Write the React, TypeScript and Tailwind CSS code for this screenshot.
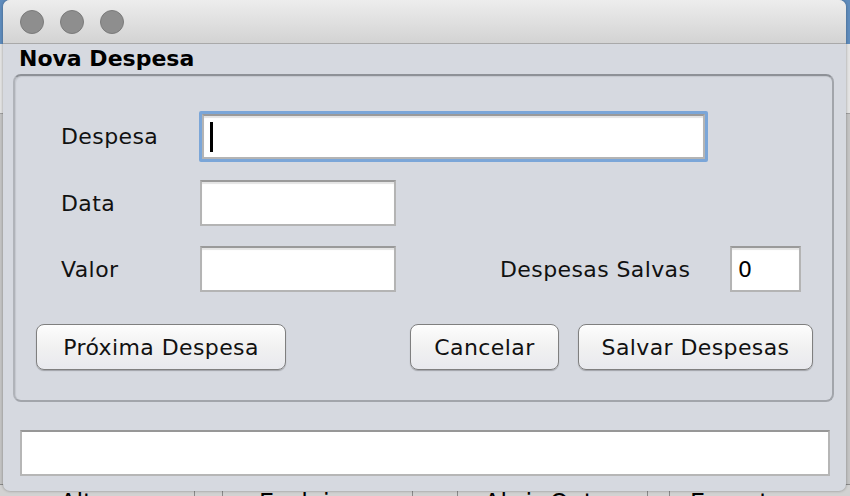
import React from "react";

const font = { fontFamily: '"DejaVu Sans", "Liberation Sans", sans-serif' };

function TextField({
  className = "",
  focused = false,
  value = "",
}: {
  className?: string;
  focused?: boolean;
  value?: string;
}) {
  const field = (
    <div className="flex h-full w-full items-center border-2 border-[#b4b4b4] border-t-[#9a9a9a] bg-white pl-[6px] text-[22px] text-black shadow-[inset_0_2px_1px_#e4e4e4]">
      {focused ? <div className="h-[30px] w-[3px] bg-black" /> : value}
    </div>
  );
  if (focused) {
    return (
      <div className={`rounded-[2px] border-[3px] border-[#7ba6d8] ${className}`}>
        {field}
      </div>
    );
  }
  return <div className={className}>{field}</div>;
}

function AquaButton({ label, className = "" }: { label: string; className?: string }) {
  return (
    <button
      className={`flex h-[46px] items-center justify-center rounded-[8px] border border-[#7f7f7f] bg-gradient-to-b from-[#fdfdfd] via-[#f1f1f1] to-[#e8e9ee] text-[22px] tracking-[0.4px] text-[#111] shadow-[0_1px_1px_rgba(0,0,0,0.25)] ${className}`}
    >
      {label}
    </button>
  );
}

export default function App() {
  return (
    <div className="relative h-[496px] w-[850px] overflow-hidden bg-[#c9c9c9]" style={font}>
      {/* window behind the dialog */}
      <div className="absolute inset-0 flex flex-col">
        <div className="h-[44px] bg-[#5f8cbd]" />
        <div className="h-[70px] border-b border-[#a0a0a0] bg-[#e4e4e4]" />
        <div className="flex-1 bg-[#c4c4c4]" />
        <div className="flex h-[12px] border-t border-[#8a8a8a] bg-[#d2d2d2] text-[24px] leading-[36px] text-black">
          <div className="w-[195px] overflow-hidden border-r border-[#8a8a8a] pl-[60px]">Alterar</div>
          <div className="w-[28px] border-r border-[#8a8a8a]" />
          <div className="w-[190px] overflow-hidden border-r border-[#8a8a8a] pl-[36px]">Excluir</div>
          <div className="w-[45px] border-r border-[#8a8a8a]" />
          <div className="w-[190px] overflow-hidden border-r border-[#8a8a8a] pl-[26px]">Abrir Outros</div>
          <div className="w-[22px] border-r border-[#8a8a8a]" />
          <div className="flex-1 overflow-hidden pl-[20px]">Exportar</div>
        </div>
      </div>

      {/* dialog window */}
      <div className="absolute left-[3px] top-0 flex h-[491px] w-[843px] flex-col overflow-hidden rounded-[7px] bg-[#d6d9e0] shadow-[0_0_3px_rgba(0,0,0,0.35)]">
        <div className="flex h-[44px] shrink-0 items-center gap-[16px] border-b border-[#a9a9a9] bg-gradient-to-b from-[#ededed] to-[#d3d3d3] pl-[17px]">
          <div className="h-[24px] w-[24px] rounded-full border border-[#7b7b7b] bg-[#8e8e8e]" />
          <div className="h-[24px] w-[24px] rounded-full border border-[#7b7b7b] bg-[#8e8e8e]" />
          <div className="h-[24px] w-[24px] rounded-full border border-[#7b7b7b] bg-[#8e8e8e]" />
        </div>

        <div className="flex flex-1 flex-col">
          <div className="h-[30px] pl-[16px] pt-[1px] text-[22px] font-bold leading-[28px] text-black">
            Nova Despesa
          </div>

          <div className="ml-[10px] mr-[12px] flex h-[328px] flex-col rounded-[8px] border-2 border-[#a2a5ab] border-t-[#8e9197] border-l-[#b0b3b9] bg-[#d6d9e0] pl-[46px] pr-[18px] pt-[35px] text-[22px] tracking-[0.4px] text-[#111] shadow-[inset_1px_1px_1px_rgba(0,0,0,0.08)]">
            <div className="flex items-center">
              <div className="w-[138px]">Despesa</div>
              <TextField focused className="h-[51px] w-[509px]" />
            </div>

            <div className="mt-[18px] flex items-center">
              <div className="w-[139px]">Data</div>
              <TextField className="h-[46px] w-[196px]" />
            </div>

            <div className="mt-[20px] flex items-center">
              <div className="w-[139px]">Valor</div>
              <TextField className="h-[46px] w-[196px]" />
              <div className="ml-[104px] w-[230px]">Despesas Salvas</div>
              <TextField className="h-[46px] w-[71px]" value="0" />
            </div>

            <div className="-ml-[25px] mt-[32px] flex items-center">
              <AquaButton label="Próxima Despesa" className="w-[250px]" />
              <AquaButton label="Cancelar" className="ml-[124px] w-[149px]" />
              <AquaButton label="Salvar Despesas" className="ml-[19px] w-[235px]" />
            </div>
          </div>

          <div className="ml-[17px] mt-[28px] h-[46px] w-[810px] border-2 border-[#b6b6b6] border-t-[#979797] bg-white" />
        </div>
      </div>
    </div>
  );
}
